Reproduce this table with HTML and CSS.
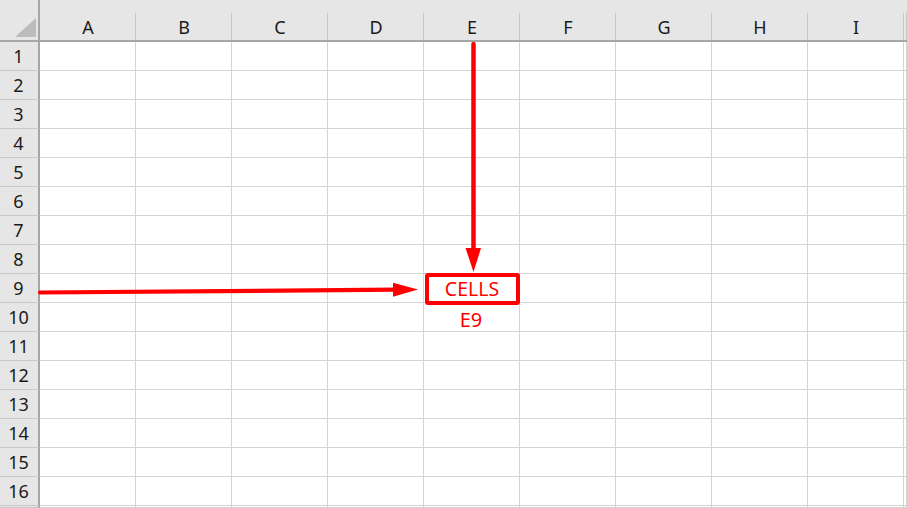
FILE: index.html
```html
<!DOCTYPE html>
<html lang="en">
<head>
    <meta charset="UTF-8">
    <title>Cells</title>
    <link rel="stylesheet" href="styles.css">
</head>
<body>
    <div class="sheet" id="sheet">
        <div class="corner"><span class="corner-tri"></span></div>
    </div>

    <!-- arrows pointing at E9 -->
    <svg class="arrows" width="907" height="508" viewBox="0 0 907 508">
        <line x1="473.5" y1="44" x2="473.5" y2="250" stroke="#ff0000" stroke-width="4.5" stroke-linecap="round"/>
        <polygon points="465.5,248 481,248 473.5,272" fill="#ff0000"/>
        <line x1="40" y1="292.5" x2="396" y2="289.7" stroke="#ff0000" stroke-width="4.2" stroke-linecap="round"/>
        <polygon points="393,282.7 393,296.7 418,289.6" fill="#ff0000"/>
    </svg>

    <script>
        const cols = ["A", "B", "C", "D", "E", "F", "G", "H", "I", ""];
        const sheet = document.getElementById("sheet");

        cols.forEach(function(c) {
            const head = document.createElement("div");
            head.className = "col-head";
            head.textContent = c;
            sheet.appendChild(head);
        });

        // 16 full rows plus a sliver of the next one
        for (let r = 1; r <= 17; r++) {
            const rowHead = document.createElement("div");
            rowHead.className = "row-head";
            if (r <= 16) rowHead.textContent = r;
            sheet.appendChild(rowHead);

            cols.forEach(function(c) {
                const cell = document.createElement("div");
                cell.className = "cell";
                if (c === "E" && r === 9) {
                    cell.classList.add("marked");
                    cell.innerHTML = '<span class="mark-box"></span>CELLS';
                }
                if (c === "E" && r === 10) {
                    cell.classList.add("label");
                    cell.textContent = "E9";
                }
                sheet.appendChild(cell);
            });
        }
    </script>
</body>
</html>
```

FILE: styles.css
```css
* {
    margin: 0;
    padding: 0;
    box-sizing: border-box;
}

body {
    width: 907px;
    height: 508px;
    overflow: hidden;
    background: #ffffff;
    font-family: 'Noto Sans', sans-serif;
    position: relative;
}

.sheet {
    display: grid;
    width: 907px;
    height: 508px;
    overflow: hidden;
    grid-template-columns: 40px repeat(9, 96px) 1fr;
    grid-template-rows: 42px repeat(16, 29px) 1fr;
}

.corner {
    background: #e6e6e6;
    border-right: 2px solid #a6a6a6;
    border-bottom: 2px solid #a6a6a6;
    position: relative;
}

.corner-tri {
    position: absolute;
    left: 15px;
    top: 18px;
    width: 21px;
    height: 19px;
    background: #bcbcbc;
    clip-path: polygon(100% 0, 100% 100%, 0 100%);
}

.col-head {
    background: #e6e6e6;
    border-bottom: 2px solid #a6a6a6;
    position: relative;
    display: flex;
    align-items: flex-end;
    justify-content: center;
    padding-bottom: 1px;
    font-size: 18px;
    color: #1a1a1a;
}

.col-head::after {
    content: '';
    position: absolute;
    right: 0;
    top: 13px;
    bottom: 0;
    width: 1px;
    background: #c8c8c8;
}

.row-head {
    background: #e6e6e6;
    border-right: 2px solid #a6a6a6;
    border-bottom: 1px solid #c8c8c8;
    display: flex;
    align-items: center;
    justify-content: center;
    padding-right: 1px;
    font-size: 18px;
    color: #1a1a1a;
    overflow: hidden;
}

.cell {
    border-right: 1px solid #d4d4d4;
    border-bottom: 1px solid #d4d4d4;
    overflow: hidden;
}

.marked,
.label {
    display: flex;
    align-items: center;
    justify-content: center;
    color: #ff0000;
    font-size: 19.5px;
    padding-right: 1px;
}

.marked {
    position: relative;
    overflow: visible;
    padding-left: 2px;
}

.label {
    font-size: 20px;
    padding-top: 4px;
}

.mark-box {
    position: absolute;
    left: 1px;
    top: -1px;
    width: 95px;
    height: 32px;
    border: 4px solid #ff0000;
    border-radius: 3px;
}

.arrows {
    position: absolute;
    left: 0;
    top: 0;
    pointer-events: none;
}
```
